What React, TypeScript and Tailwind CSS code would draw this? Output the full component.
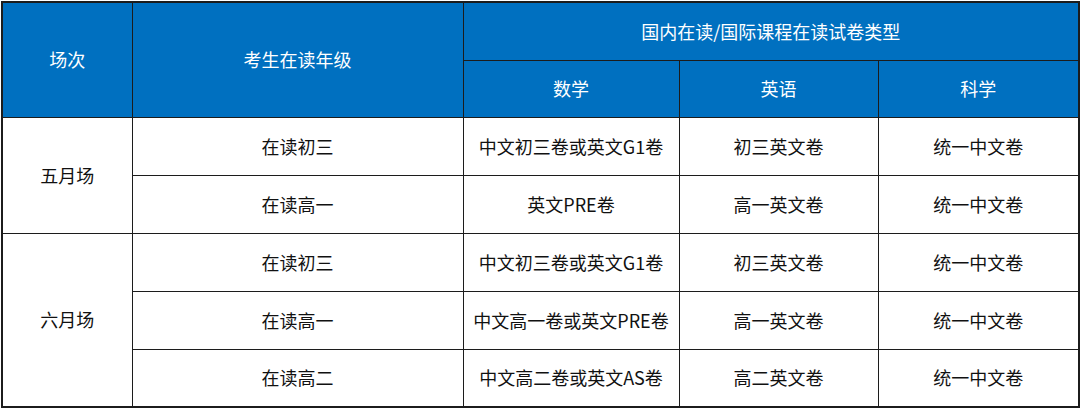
import React from 'react';

type Row = { grade: string; math: string; english: string; science: string };

const SESSIONS: { name: string; rows: Row[] }[] = [
  {
    name: '五月场',
    rows: [
      { grade: '在读初三', math: '中文初三卷或英文G1卷', english: '初三英文卷', science: '统一中文卷' },
      { grade: '在读高一', math: '英文PRE卷', english: '高一英文卷', science: '统一中文卷' },
    ],
  },
  {
    name: '六月场',
    rows: [
      { grade: '在读初三', math: '中文初三卷或英文G1卷', english: '初三英文卷', science: '统一中文卷' },
      { grade: '在读高一', math: '中文高一卷或英文PRE卷', english: '高一英文卷', science: '统一中文卷' },
      { grade: '在读高二', math: '中文高二卷或英文AS卷', english: '高二英文卷', science: '统一中文卷' },
    ],
  },
];

const th = 'border-[1.5px] border-[#1c1c1c] bg-[#0070c0] text-white font-normal text-[18px] text-center align-middle p-0';
const td = 'border-[1.5px] border-[#1c1c1c] text-[#111] text-[18px] text-center align-middle p-0';

export default function App() {
  return (
    <div
      className="w-[1080px] h-[410px] bg-white pl-[1px] pt-[1px]"
      style={{ fontFamily: '"Noto Sans CJK SC", "Noto Sans", sans-serif' }}
    >
      <table className="border-collapse table-fixed w-[1077px] border-2 border-[#1c1c1c]">
        <colgroup>
          <col className="w-[130px]" />
          <col className="w-[331px]" />
          <col className="w-[216px]" />
          <col className="w-[199px]" />
          <col className="w-[201px]" />
        </colgroup>
        <thead>
          <tr className="h-[58px]">
            <th rowSpan={2} className={th}>场次</th>
            <th rowSpan={2} className={th}>考生在读年级</th>
            <th colSpan={3} className={th}>国内在读/国际课程在读试卷类型</th>
          </tr>
          <tr className="h-[57px]">
            <th className={th}>数学</th>
            <th className={th}>英语</th>
            <th className={th}>科学</th>
          </tr>
        </thead>
        <tbody>
          {SESSIONS.map((s) =>
            s.rows.map((r, i) => (
              <tr key={s.name + i} className="h-[58px]">
                {i === 0 && (
                  <td rowSpan={s.rows.length} className={td}>
                    {s.name}
                  </td>
                )}
                <td className={td}>{r.grade}</td>
                <td className={td}>{r.math}</td>
                <td className={td}>{r.english}</td>
                <td className={td}>{r.science}</td>
              </tr>
            ))
          )}
        </tbody>
      </table>
    </div>
  );
}
